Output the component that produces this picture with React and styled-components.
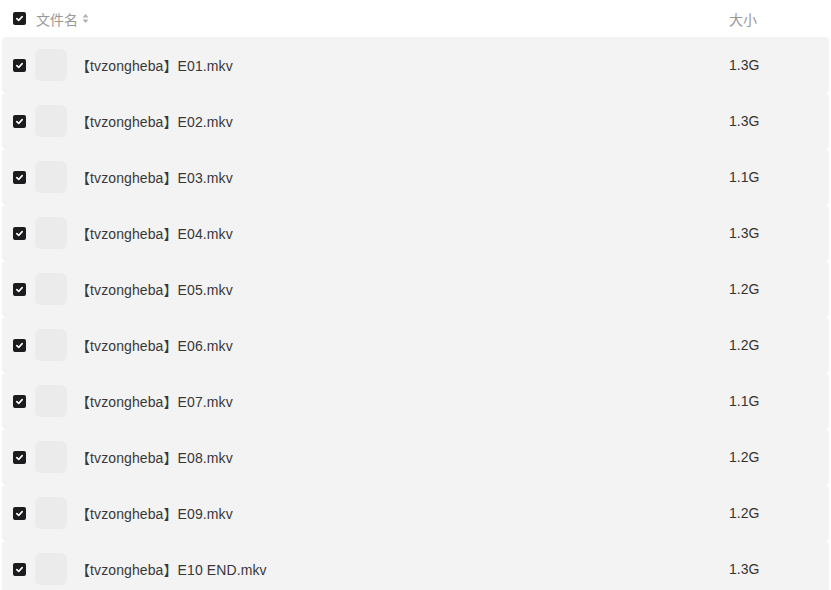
import React from "react";
import styled, { createGlobalStyle } from "styled-components";

const Global = createGlobalStyle`
  html, body { margin: 0; padding: 0; background: #fff; }
  body { font-family: "Liberation Sans", "Noto Sans CJK SC", sans-serif; }
`;

const Table = styled.div`
  width: 831px;
  display: flex;
  flex-direction: column;
`;

const Header = styled.div`
  height: 37px;
  display: flex;
  align-items: center;
  padding-left: 13px;
  font-size: 14px;
  color: #999;
`;

const Box = styled.span`
  width: 13px;
  height: 13px;
  border-radius: 2px;
  background: #1c1c1e;
  display: flex;
  align-items: center;
  justify-content: center;
  flex: none;
`;

const NameHead = styled.div`
  margin-left: 10px;
  display: flex;
  align-items: center;
  gap: 4px;
  flex: 1;
`;

const SizeCol = styled.div`
  width: ${(p) => (p.$head ? "102px" : "100px")};
  flex: none;
  font-size: 14px;
  color: ${(p) => (p.$head ? "#999" : "#333")};
`;

const Row = styled.div`
  height: 56px;
  margin-left: 2px;
  margin-right: 2px;
  padding-left: 11px;
  display: flex;
  align-items: center;
  background: #f3f3f3;
  border-radius: 4px;
`;

const Thumb = styled.div`
  width: 32px;
  height: 32px;
  border-radius: 6px;
  background: #ebebeb;
  margin-left: 9px;
  flex: none;
`;

const Name = styled.div`
  flex: 1;
  margin-left: 9px;
  margin-top: -1px;
  font-size: 14px;
  color: #383838;
  letter-spacing: 0.1px;
`;

const Check = () => (
  <Box>
    <svg width="9" height="9" viewBox="0 0 9 9">
      <path d="M1.8 4.6 L3.7 6.4 L7.2 2.6" fill="none" stroke="#fff" strokeWidth="1.6" strokeLinecap="round" strokeLinejoin="round" />
    </svg>
  </Box>
);

const SortIcon = () => (
  <svg width="7" height="11" viewBox="0 0 7 11">
    <path d="M3.5 1 L6.5 4.5 H0.5 Z" fill="#b0b0b0" />
    <path d="M3.5 10 L6.5 6.5 H0.5 Z" fill="#b0b0b0" />
  </svg>
);

const files = [
  ["E01.mkv", "1.3G"],
  ["E02.mkv", "1.3G"],
  ["E03.mkv", "1.1G"],
  ["E04.mkv", "1.3G"],
  ["E05.mkv", "1.2G"],
  ["E06.mkv", "1.2G"],
  ["E07.mkv", "1.1G"],
  ["E08.mkv", "1.2G"],
  ["E09.mkv", "1.2G"],
  ["E10 END.mkv", "1.3G"],
];

export default function App() {
  return (
    <>
      <Global />
      <Table>
        <Header>
          <Check />
          <NameHead>
            文件名 <SortIcon />
          </NameHead>
          <SizeCol $head>大小</SizeCol>
        </Header>
        {files.map(([n, s]) => (
          <Row key={n}>
            <Check />
            <Thumb />
            <Name>【tvzongheba】{n}</Name>
            <SizeCol>{s}</SizeCol>
          </Row>
        ))}
      </Table>
    </>
  );
}
